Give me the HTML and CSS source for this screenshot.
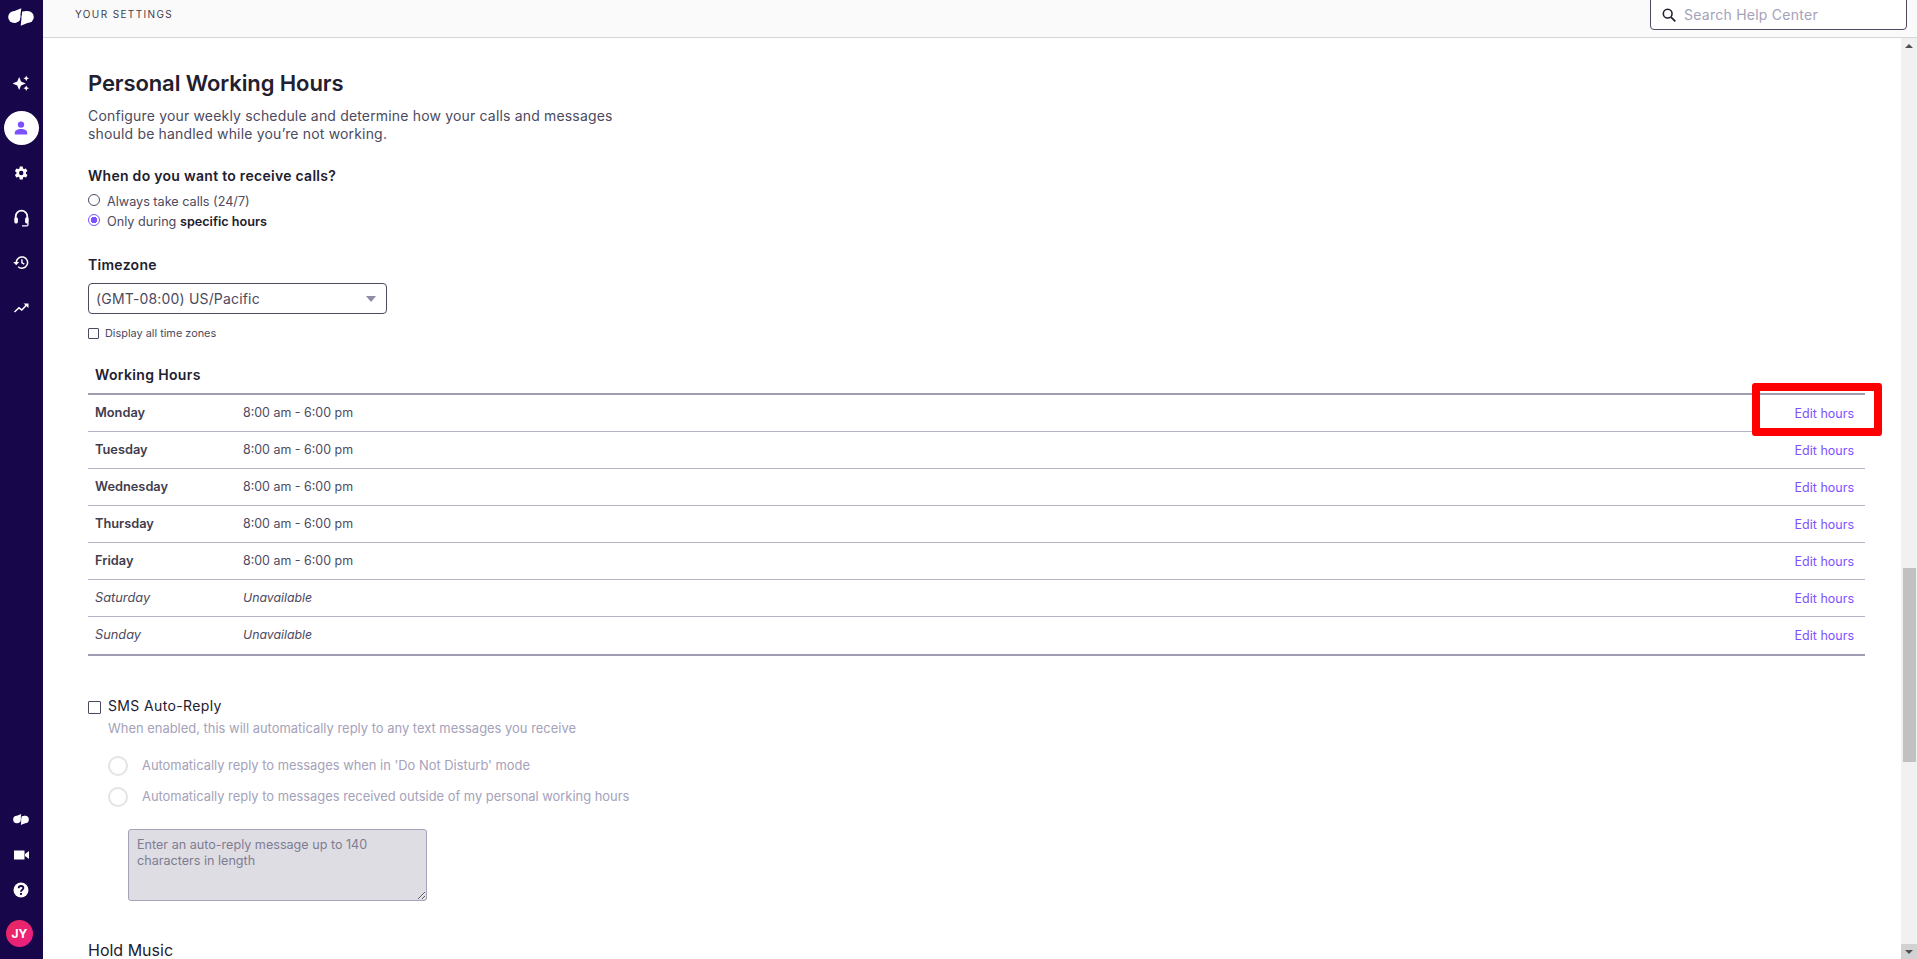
FILE: index.html
```html
<!DOCTYPE html>
<html lang="en">
<head>
<meta charset="utf-8">
<title>Your Settings</title>
<link rel="stylesheet" href="styles.css">
</head>
<body>
<div class="app">
  <nav class="sidebar">
    <div class="brand">
      <svg width="26" height="18" viewBox="0 0 26 18"><circle cx="6.300" cy="9" r="6.100" fill="#fff"/><path fill="#fff" d="M6.500 2.900 13.300.2 11.800 12.500 6.500 15z"/><circle cx="19.700" cy="9" r="6.100" fill="#fff"/><path fill="#fff" d="M19.500 2.900 14.200 3.600 12.700 17.800 19.500 15z"/></svg>
    </div>
    <a class="nav-item"><svg class="sparkle" width="17" height="17" viewBox="0 0 18 18"><path fill="#fff" d="M6.500 2 8.500 7 13.500 9 8.500 11 6.500 16 4.500 11 -.5 9 4.500 7zM14 .5l.9 2.100 2.100.9-2.100.9-.9 2.100-.9-2.100-2.100-.9 2.100-.9zM14 11l.9 2.100 2.100.9-2.100.9-.9 2.100-.9-2.100-2.100-.9 2.100-.9z"/></svg></a>
    <a class="nav-item"><span class="nav-active"><svg width="14" height="14" viewBox="0 0 14 14"><circle cx="7" cy="3.600" r="3.200" fill="#7c52ff"/><path fill="#7c52ff" d="M.8 13.500V11.500C.8 9.300 3.800 8 7 8s6.200 1.300 6.200 3.500v2z"/></svg></span></a>
    <a class="nav-item"><svg width="14" height="14" viewBox="0 0 24 24"><path fill="#fff" d="M20.400 13.200c.1-.4.100-.8.100-1.200s0-.8-.1-1.200l2.300-1.800c.2-.2.300-.5.100-.7l-2.200-3.800c-.1-.2-.4-.3-.7-.2l-2.700 1.100c-.6-.4-1.200-.8-1.800-1L15.100 1.500c0-.3-.3-.5-.5-.5h-4.400c-.3 0-.5.200-.5.500l-.4 2.900c-.7.200-1.300.6-1.900 1L4.700 4.300c-.3-.1-.6 0-.7.200L1.800 8.300c-.2.200-.1.500.1.700l2.300 1.800c0 .4-.1.800-.1 1.200s0 .8.100 1.200l-2.300 1.800c-.2.200-.3.500-.1.700L4 19.500c.1.200.4.300.7.200l2.700-1.100c.6.400 1.200.8 1.900 1l.4 2.900c0 .3.200.5.500.5h4.400c.2 0 .5-.2.500-.5l.4-2.900c.6-.2 1.200-.6 1.800-1l2.700 1.100c.3.100.6 0 .7-.2l2.200-3.800c.2-.2.100-.5-.1-.7zM12.400 15.800a3.800 3.800 0 1 1 0-7.600 3.800 3.800 0 0 1 0 7.600z"/></svg></a>
    <a class="nav-item"><svg width="15" height="18" viewBox="0 0 15 18"><path fill="none" stroke="#fff" stroke-width="1.800" d="M1.700 10V7.500a5.800 5.800 0 0 1 11.600 0V10"/><rect x=".3" y="8.500" width="3.600" height="6" rx="1.400" fill="#fff"/><rect x="11.100" y="8.500" width="3.600" height="6" rx="1.400" fill="#fff"/><path fill="none" stroke="#fff" stroke-width="1.300" d="M14 14v1.400c0 .9-.5 1.400-1.300 1.400H8"/></svg></a>
    <a class="nav-item"><svg width="16" height="15" viewBox="0 0 17 16"><path fill="none" stroke="#fff" stroke-width="1.600" d="M3.500 8a6 6 0 1 1 2 4.500"/><path fill="#fff" d="M.2 7.500h6.400L3.400 11z"/><path fill="none" stroke="#fff" stroke-width="1.500" d="M9.500 4.500V8.300L12 9.800"/></svg></a>
    <a class="nav-item"><svg width="15" height="10" viewBox="0 0 15 10"><path fill="none" stroke="#fff" stroke-width="1.500" d="M.5 9 5 4.800 7.800 7 13 1.500"/><path fill="#fff" d="M9.500.5H14.500V5z"/></svg></a>
    <div class="nav-bottom">
      <a class="nav-item nav-small"><svg width="16" height="11" viewBox="0 0 26 18"><circle cx="6.300" cy="9" r="6.100" fill="#fff"/><path fill="#fff" d="M6.500 2.900 13.300.2 11.800 12.500 6.500 15z"/><circle cx="19.700" cy="9" r="6.100" fill="#fff"/><path fill="#fff" d="M19.500 2.900 14.200 3.600 12.700 17.800 19.500 15z"/></svg></a>
      <a class="nav-item nav-small"><svg width="15" height="10" viewBox="0 0 15 10"><rect y=".5" width="10.500" height="9" fill="#fff"/><path fill="#fff" d="M11 4 15 1v8l-4-3z"/></svg></a>
      <a class="nav-item nav-small"><svg width="16" height="16" viewBox="0 0 16 16"><circle cx="8" cy="8" r="7.500" fill="#fff"/><path fill="none" stroke="#18064a" stroke-width="1.800" d="M5.600 6.200C5.700 4.800 6.700 4 8 4c1.400 0 2.400.9 2.400 2 0 1.800-2.400 1.800-2.400 3.700"/><circle cx="8" cy="11.900" r="1.100" fill="#18064a"/></svg></a>
      <span class="avatar">JY</span>
    </div>
  </nav>
  <div class="workspace">
    <header class="topbar">
      <span class="topbar-title">YOUR SETTINGS</span>
      <label class="search">
        <svg width="14" height="14" viewBox="0 0 16 16"><circle cx="6.500" cy="6.500" r="5" fill="none" stroke="#22202e" stroke-width="1.800"/><path stroke="#22202e" stroke-width="2" d="m10.300 10.300 4.900 4.900"/></svg>
        <input class="search-input" type="text" placeholder="Search Help Center">
      </label>
    </header>
    <div class="body-row">
      <main class="content">
        <h1 class="title">Personal Working Hours</h1>
        <p class="desc">Configure your weekly schedule and determine how your calls and messages<br>should be handled while you’re not working.</p>
        <h2 class="label question">When do you want to receive calls?</h2>
        <label class="choice choice-first"><input class="radio" type="radio" name="calls"><span>Always take calls (24/7)</span></label>
        <label class="choice"><input class="radio" type="radio" name="calls" checked><span>Only during <b>specific hours</b></span></label>
        <h2 class="label timezone">Timezone</h2>
        <div class="select-wrap">
          <select class="select"><option>(GMT-08:00) US/Pacific</option></select>
        </div>
        <label class="tz-all"><input class="check check-small" type="checkbox"><span>Display all time zones</span></label>
        <h2 class="label hours-title">Working Hours</h2>
        <div class="hours">
          <div class="row"><span class="day">Monday</span><span class="time">8:00 am - 6:00 pm</span><a class="edit">Edit hours</a></div>
          <div class="row"><span class="day">Tuesday</span><span class="time">8:00 am - 6:00 pm</span><a class="edit">Edit hours</a></div>
          <div class="row"><span class="day">Wednesday</span><span class="time">8:00 am - 6:00 pm</span><a class="edit">Edit hours</a></div>
          <div class="row"><span class="day">Thursday</span><span class="time">8:00 am - 6:00 pm</span><a class="edit">Edit hours</a></div>
          <div class="row"><span class="day">Friday</span><span class="time">8:00 am - 6:00 pm</span><a class="edit">Edit hours</a></div>
          <div class="row off"><span class="day">Saturday</span><span class="time">Unavailable</span><a class="edit">Edit hours</a></div>
          <div class="row off"><span class="day">Sunday</span><span class="time">Unavailable</span><a class="edit">Edit hours</a></div>
        </div>
        <label class="sms"><input class="check" type="checkbox"><span>SMS Auto-Reply</span></label>
        <p class="sms-sub">When enabled, this will automatically reply to any text messages you receive</p>
        <div class="sms-option"><span class="ghost-radio"></span><span>Automatically reply to messages when in 'Do Not Disturb' mode</span></div>
        <div class="sms-option"><span class="ghost-radio"></span><span>Automatically reply to messages received outside of my personal working hours</span></div>
        <textarea class="reply" disabled placeholder="Enter an auto-reply message up to 140 characters in length"></textarea>
        <h2 class="hold">Hold Music</h2>
      </main>
      <div class="scrollbar"><span class="arrow"></span><span class="thumb"></span><span class="scroll-down"></span></div>
    </div>
  </div>
  <div class="callout"></div>
</div>
</body>
</html>
```
FILE: styles.css
```css
* { box-sizing: border-box; }
html, body { margin: 0; height: 100%; overflow: hidden; }
body { font-family: Inter, "Liberation Sans", sans-serif; color: #22202e; background: #fff; }
.app { display: flex; height: 959px; position: relative; overflow: hidden; }

.sidebar { width: 43px; flex: none; background: #18064a; display: flex; flex-direction: column; align-items: flex-start; }
.brand { height: 60px; padding: 8px 0 0 8px; line-height: 0; }
.nav-item { height: 45px; width: 42px; display: flex; align-items: center; justify-content: center; }
.sparkle { margin-top: 2px; }
.nav-active { width: 35px; height: 34px; border-radius: 50%; background: #fff; display: flex; align-items: center; justify-content: center; }
.nav-bottom { margin-top: auto; padding-bottom: 12px; display: flex; flex-direction: column; align-items: flex-start; }
.nav-small { height: 35px; }
.avatar { width: 27px; height: 27px; margin: 13px 0 0 6px; border-radius: 50%; background: linear-gradient(135deg, #e8285c, #ec1e86); color: #fff; font-size: 12px; font-weight: 700; display: flex; align-items: center; justify-content: center; }

.workspace { flex: 1; min-width: 0; display: flex; flex-direction: column; }
.topbar { height: 38px; flex: none; background: #fafafa; border-bottom: 1px solid #d6d6d6; display: flex; justify-content: space-between; align-items: flex-end; padding: 0 10px 7px 32px; }
.topbar-title { font-size: 10px; letter-spacing: 1.380px; color: #3f3d4d; align-self: flex-start; margin-top: 8px; }
.search { width: 257px; height: 36px; background: #fff; border: 1px solid #4c4a60; border-radius: 4px; display: flex; align-items: center; gap: 8px; padding: 5px 11px 0; }
.search svg { flex: none; }
.search-input { border: 0; outline: 0; background: none; flex: 1; min-width: 0; padding: 0; font: 14px Inter, sans-serif; letter-spacing: .25px; }
.search-input::placeholder { color: #a5a2ba; opacity: 1; }

.body-row { flex: 1; min-height: 0; display: flex; }
.content { flex: 1; min-width: 0; overflow: hidden; padding: 31px 36px 0 45px; }
.title { margin: 0; font-size: 22px; line-height: 28px; font-weight: 600; letter-spacing: -.1px; color: #22202e; }
.desc { margin: 10px 0 0; font-size: 14px; line-height: 18px; letter-spacing: .17px; color: #4c4a60; }
.label { margin: 0; font-size: 14px; line-height: 18px; font-weight: 600; letter-spacing: .28px; color: #22202e; }
.question { margin-top: 24px; }
.choice { display: flex; align-items: center; height: 20.500px; font-size: 12.650px; color: #4c4a60; gap: 7px; }
.choice b { font-weight: 600; color: #22202e; }
.choice-first { margin-top: 6px; }
.radio { appearance: none; width: 12px; height: 12px; margin: -3px 0 0; border: 1px solid #4c4a60; border-radius: 50%; background: #fff; }
.radio:checked { border-color: #7c52ff; background: radial-gradient(circle, #7c52ff 0 3px, #fff 3.500px); }
.timezone { margin-top: 24px; }
.select-wrap { width: 299px; height: 31px; margin-top: 9px; position: relative; }
.select-wrap::after { content: ""; position: absolute; right: 11px; top: 13px; border: 5.500px solid transparent; border-top: 6px solid #8f8ca6; border-bottom: 0; }
.select { appearance: none; width: 100%; height: 100%; border: 1px solid #4c4a60; border-radius: 4px; background: #fff; padding: 0 7px 1px; font: 14px Inter, sans-serif; letter-spacing: .17px; color: #4c4a60; }
.tz-all { display: flex; align-items: center; gap: 6px; height: 16px; margin-top: 11px; font-size: 10.900px; color: #4c4a60; }
.check { appearance: none; width: 13px; height: 13px; margin: 0; border: 1px solid #4c4a60; border-radius: 1px; background: #fff; flex: none; }
.check-small { width: 11px; height: 11px; }
.hours-title { margin-top: 25px; padding-left: 7px; height: 27px; font-size: 14px; letter-spacing: .35px; }

.hours { border-top: 2px solid #a09db3; border-bottom: 2px solid #a09db3; }
.row { height: 37px; display: flex; align-items: center; padding: 0 11px 0 7px; font-size: 12.800px; color: #4c4a60; border-bottom: 1px solid #b5b2c6; }
.row:last-child { border-bottom: 0; }
.day { width: 148px; font-weight: 600; color: #3f3d4d; margin-bottom: 2px; }
.time { flex: 1; font-size: 12.450px; margin-bottom: 2px; }
.edit { color: #7c52ff; font-size: 12.500px; }
.off .day, .off .time { font-style: italic; font-weight: 400; color: #4c4a60; }
.off .time { font-size: 12.300px; }

.sms { display: flex; align-items: center; gap: 7px; margin-top: 39px; height: 20px; font-size: 14px; letter-spacing: .37px; color: #22202e; }
.sms .check { margin-top: 5px; }
.sms-sub { margin: 3px 0 0 20px; font-size: 12.950px; line-height: 20px; color: #a5a2ba; }
.sms-option { display: flex; align-items: center; gap: 14px; margin: 0 0 0 20px; height: 31px; font-size: 12.900px; color: #a5a2ba; }
.sms-sub + .sms-option { margin-top: 12px; }
.ghost-radio { width: 20px; height: 20px; border: 2px solid #e4e4e8; border-radius: 50%; background: #fff; flex: none; }
.reply { display: block; width: 299px; height: 72px; margin: 17px 0 0 40px; padding: 7px 8px; background: #dedde3; border: 1px solid #a5a2ba; border-radius: 3px; font: 12.600px/16px Inter, sans-serif; resize: both; }
.reply::placeholder { color: #7f7c92; opacity: 1; }
.hold { margin: 40px 0 0; font-size: 16px; line-height: 18px; font-weight: 400; color: #22202e; }

.scrollbar { width: 16px; flex: none; background: #f1f1f1; display: flex; flex-direction: column; align-items: center; padding-top: 6px; position: relative; }
.arrow { border: 4px solid transparent; border-bottom: 4px solid #505050; border-top: 0; }
.thumb { width: 13px; height: 194px; margin-top: 520px; background: #c1c1c1; }
.scroll-down { margin-top: auto; width: 16px; height: 15px; background: #d2d2d2; display: flex; align-items: center; justify-content: center; }
.scroll-down::after { content: ""; border: 4px solid transparent; border-top: 4px solid #505050; border-bottom: 0; }

.callout { position: absolute; left: 1752px; top: 383px; width: 130px; height: 53px; border: 8px solid #f00; border-radius: 3px; }
```
